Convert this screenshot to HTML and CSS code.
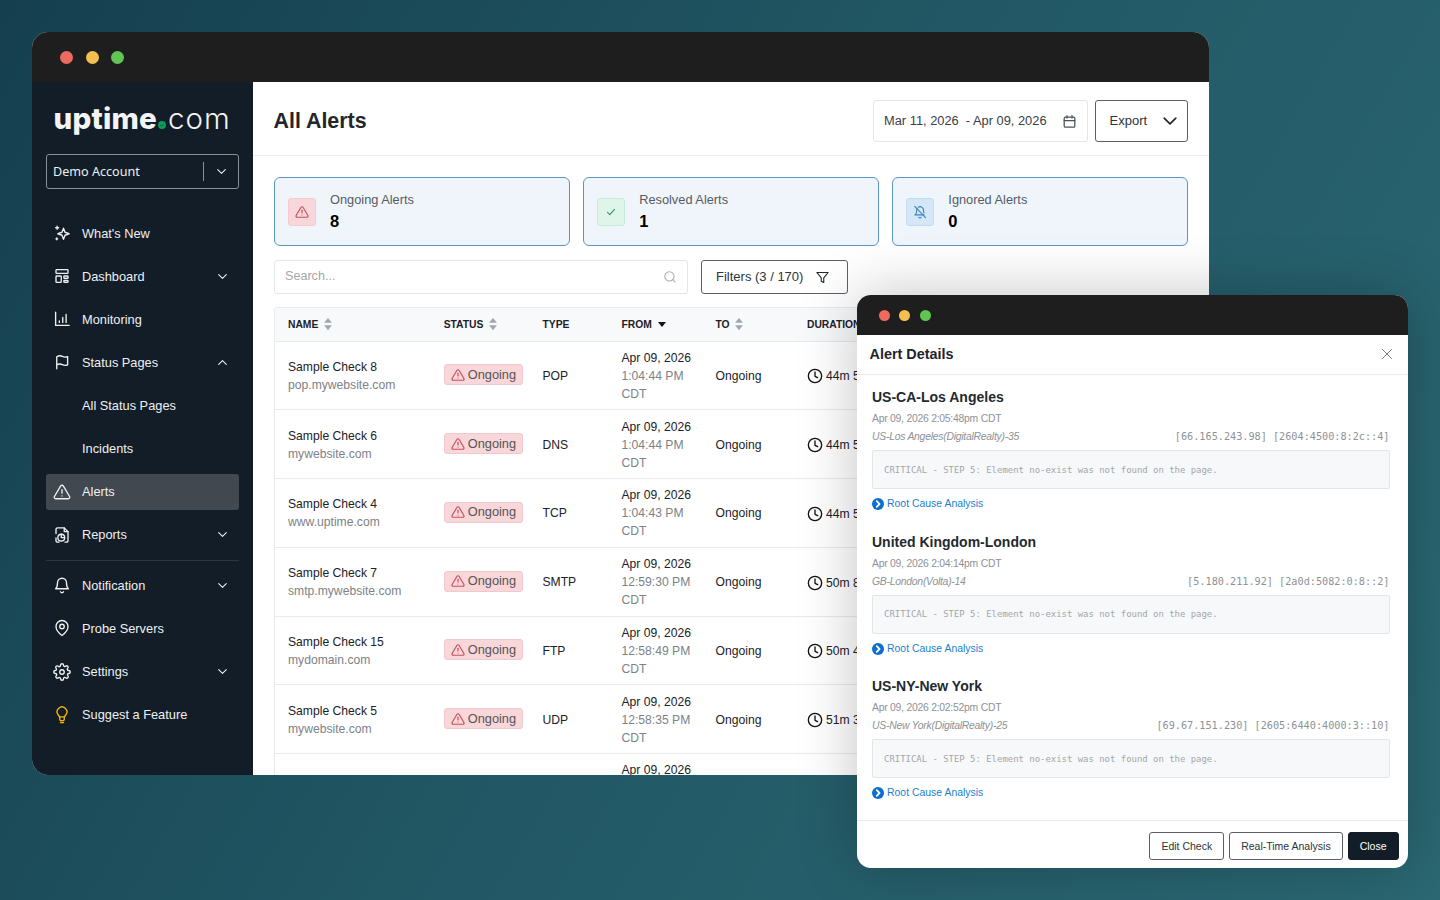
FILE: index.html
```html
<!DOCTYPE html>
<html lang="en">
<head>
<meta charset="utf-8">
<title>All Alerts</title>
<link rel="stylesheet" href="styles.css">
</head>
<body>
<svg class="defs" width="0" height="0" aria-hidden="true">
  <symbol id="i-alert" viewBox="0 0 24 24"><path d="M10.3 3.9 1.9 18a2 2 0 0 0 1.7 3h16.8a2 2 0 0 0 1.7-3L13.7 3.9a2 2 0 0 0-3.4 0Z"/><path d="M12 9v4.5"/><path d="M12 17.2h.01"/></symbol>
  <symbol id="i-down" viewBox="0 0 24 24"><path d="m5 8.5 7 7 7-7"/></symbol>
  <symbol id="i-up" viewBox="0 0 24 24"><path d="m5 15.5 7-7 7 7"/></symbol>
  <symbol id="i-clock" viewBox="0 0 24 24"><circle cx="12" cy="12" r="10"/><path d="M12 6v6.5l4 2"/></symbol>
  <symbol id="i-sort" viewBox="0 0 10 16"><path d="M5 1 9.5 6.6H.5Z"/><path d="M5 15 .5 9.4h9Z"/></symbol>
</svg>

<div class="desktop">
  <section class="window main-window">
    <header class="titlebar titlebar-main">
      <i class="dot red"></i><i class="dot yellow"></i><i class="dot green"></i>
    </header>
    <div class="app">
      <aside class="sidebar">
        <div class="logo"><span class="logo-a">uptime</span><span class="logo-dot"><svg viewBox="0 0 10 10"><path d="m3 5.2 1.500 1.500 2.600-3"/></svg></span><span class="logo-b">com</span></div>
        <div class="account">
          <span class="account-name">Demo Account</span>
          <span class="account-toggle"><svg class="chev-sm"><use href="#i-down"/></svg></span>
        </div>
        <nav class="nav">
          <a class="nav-item"><svg class="nav-icon" viewBox="0 0 24 24"><path d="M14 5.500 16 11l5.500 2-5.500 2-2 5.500-2-5.500-5.500-2 5.500-2Z"/><path d="M5.500 3v4M3.500 5h4"/><path d="M5 18.500v2.500M3.800 19.800h2.500"/></svg><span>What's New</span></a>
          <a class="nav-item"><svg class="nav-icon" viewBox="0 0 24 24"><rect x="4" y="3.500" width="16" height="5" rx="1"/><rect x="4" y="12" width="7" height="8.500" rx="1"/><rect x="14.500" y="12" width="5.500" height="3" rx=".8"/><rect x="14.500" y="18" width="5.500" height="2.500" rx=".8"/></svg><span>Dashboard</span><svg class="nav-chev"><use href="#i-down"/></svg></a>
          <a class="nav-item"><svg class="nav-icon" viewBox="0 0 24 24"><path d="M3.500 3v17.500h18"/><path d="M8.500 16.500v-2M13 16.500V10M17.500 16.500V6"/></svg><span>Monitoring</span></a>
          <a class="nav-item"><svg class="nav-icon" viewBox="0 0 24 24"><path d="M5 21V5c3.500-2.200 5.500-1.500 7.500-.5s4 1.500 7 .2v11c-3 1.300-5 .8-7-.2s-4.500-1.500-7.500.3"/></svg><span>Status Pages</span><svg class="nav-chev"><use href="#i-up"/></svg></a>
          <a class="nav-item"><span class="nav-spacer"></span><span>All Status Pages</span></a>
          <a class="nav-item"><span class="nav-spacer"></span><span>Incidents</span></a>
          <a class="nav-item active"><svg class="nav-icon" viewBox="0 0 24 24"><use href="#i-alert"/></svg><span>Alerts</span></a>
          <a class="nav-item"><svg class="nav-icon" viewBox="0 0 24 24"><path d="M8 21.500H6a2 2 0 0 1-2-2V16M4 10V4.500a2 2 0 0 1 2-2h9l5 5v12a2 2 0 0 1-2 2h-2"/><path d="M15 2.500v5h5"/><circle cx="11" cy="15.500" r="4.500"/><path d="M11 11v4.500h4.500"/></svg><span>Reports</span><svg class="nav-chev"><use href="#i-down"/></svg></a>
          <hr class="nav-divider">
          <a class="nav-item"><svg class="nav-icon" viewBox="0 0 24 24"><path d="M6 9a6 6 0 0 1 12 0c0 6 2.500 8 2.500 8h-17S6 15 6 9Z"/><path d="M10 21a2.200 2.200 0 0 0 4 0"/></svg><span>Notification</span><svg class="nav-chev"><use href="#i-down"/></svg></a>
          <a class="nav-item"><svg class="nav-icon" viewBox="0 0 24 24"><path d="M20 10c0 6-8 12-8 12s-8-6-8-12a8 8 0 0 1 16 0Z"/><circle cx="12" cy="10" r="3"/></svg><span>Probe Servers</span></a>
          <a class="nav-item"><svg class="nav-icon" viewBox="0 0 24 24"><circle cx="12" cy="12" r="3"/><path d="M19.400 15a1.650 1.650 0 0 0 .33 1.820l.06.06a2 2 0 1 1-2.830 2.830l-.06-.06a1.650 1.650 0 0 0-2.820 1.160V21a2 2 0 1 1-4 0v-.09A1.650 1.650 0 0 0 7.260 19.700l-.06.06a2 2 0 1 1-2.830-2.830l.06-.06A1.650 1.650 0 0 0 3.270 14H3a2 2 0 1 1 0-4h.09A1.650 1.650 0 0 0 4.300 7.260l-.06-.06a2 2 0 1 1 2.830-2.830l.06.06A1.650 1.650 0 0 0 10 3.270V3a2 2 0 1 1 4 0v.09a1.650 1.650 0 0 0 2.740 1.210l.06-.06a2 2 0 1 1 2.830 2.830l-.06.06A1.650 1.650 0 0 0 20.730 10H21a2 2 0 1 1 0 4h-.09a1.650 1.650 0 0 0-1.510 1Z"/></svg><span>Settings</span><svg class="nav-chev"><use href="#i-down"/></svg></a>
          <a class="nav-item"><svg class="nav-icon bulb" viewBox="0 0 24 24"><path d="M15.500 14.500c.3-1.200 1-2 1.800-3A6.500 6.500 0 1 0 6.700 11.500c.8 1 1.500 1.800 1.800 3Z"/><path d="M9 14.500V18a1.500 1.500 0 0 0 1.500 1.500h3A1.500 1.500 0 0 0 15 18v-3.500"/><path d="M10 22h4"/></svg><span>Suggest a Feature</span></a>
        </nav>
      </aside>

      <main class="content">
        <header class="content-head">
          <h1 class="page-title">All Alerts</h1>
          <div class="head-actions">
            <div class="date-range"><span class="lift">Mar 11, 2026&nbsp; - Apr 09, 2026</span>
              <svg class="cal" viewBox="0 0 24 24"><rect x="3.500" y="5" width="17" height="16" rx="2"/><path d="M3.500 10.500h17M8 2.500v4M16 2.500v4"/></svg></div>
            <button class="btn btn-export"><span class="lift">Export</span><svg class="export-chev"><use href="#i-down"/></svg></button>
          </div>
        </header>

        <div class="content-body">
          <div class="cards">
            <div class="card">
              <span class="card-icon red-box"><svg viewBox="0 0 24 24"><use href="#i-alert"/></svg></span>
              <div><div class="card-label">Ongoing Alerts</div><div class="card-value">8</div></div>
            </div>
            <div class="card">
              <span class="card-icon green-box"><svg viewBox="0 0 24 24"><path d="m6 12.500 4 4 8-9"/></svg></span>
              <div><div class="card-label">Resolved Alerts</div><div class="card-value">1</div></div>
            </div>
            <div class="card">
              <span class="card-icon blue-box"><svg viewBox="0 0 24 24"><path d="M10 21a2.200 2.200 0 0 0 4 0"/><path d="M19 17H3.500S6.500 15 6.500 9c0-1 .2-1.800.6-2.600M9 3.700A6 6 0 0 1 18 9c0 2 .3 3.600.8 4.800"/><path d="m3 2.500 18.500 19"/></svg></span>
              <div><div class="card-label">Ignored Alerts</div><div class="card-value">0</div></div>
            </div>
          </div>

          <div class="toolbar">
            <div class="search"><span class="search-text">Search...</span><svg viewBox="0 0 24 24"><circle cx="11" cy="11" r="8"/><path d="m21 21-4.300-4.300"/></svg></div>
            <button class="btn btn-filters"><span class="lift">Filters (3 / 170)</span><svg viewBox="0 0 24 24"><path d="M3 4h18l-7 8.500V20l-4-2v-5.500Z"/></svg></button>
          </div>

          <table class="alerts">
            <colgroup><col class="c-name"><col class="c-status"><col class="c-type"><col class="c-from"><col class="c-to"><col class="c-dur"></colgroup>
            <thead>
              <tr>
                <th>NAME <svg class="sort"><use href="#i-sort"/></svg></th>
                <th>STATUS <svg class="sort"><use href="#i-sort"/></svg></th>
                <th>TYPE</th>
                <th>FROM <i class="caret"></i></th>
                <th>TO <svg class="sort"><use href="#i-sort"/></svg></th>
                <th>DURATION</th>
              </tr>
            </thead>
            <tbody>
              <tr>
                <td><div class="check">Sample Check 8</div><div class="muted">pop.mywebsite.com</div></td>
                <td><span class="badge"><svg viewBox="0 0 24 24"><use href="#i-alert"/></svg>Ongoing</span></td>
                <td>POP</td>
                <td><div>Apr 09, 2026</div><div class="muted">1:04:44 PM</div><div class="muted">CDT</div></td>
                <td>Ongoing</td>
                <td><span class="dur"><svg viewBox="0 0 24 24"><use href="#i-clock"/></svg>44m 5</span></td>
              </tr>
              <tr>
                <td><div class="check">Sample Check 6</div><div class="muted">mywebsite.com</div></td>
                <td><span class="badge"><svg viewBox="0 0 24 24"><use href="#i-alert"/></svg>Ongoing</span></td>
                <td>DNS</td>
                <td><div>Apr 09, 2026</div><div class="muted">1:04:44 PM</div><div class="muted">CDT</div></td>
                <td>Ongoing</td>
                <td><span class="dur"><svg viewBox="0 0 24 24"><use href="#i-clock"/></svg>44m 5</span></td>
              </tr>
              <tr>
                <td><div class="check">Sample Check 4</div><div class="muted">www.uptime.com</div></td>
                <td><span class="badge"><svg viewBox="0 0 24 24"><use href="#i-alert"/></svg>Ongoing</span></td>
                <td>TCP</td>
                <td><div>Apr 09, 2026</div><div class="muted">1:04:43 PM</div><div class="muted">CDT</div></td>
                <td>Ongoing</td>
                <td><span class="dur"><svg viewBox="0 0 24 24"><use href="#i-clock"/></svg>44m 5</span></td>
              </tr>
              <tr>
                <td><div class="check">Sample Check 7</div><div class="muted">smtp.mywebsite.com</div></td>
                <td><span class="badge"><svg viewBox="0 0 24 24"><use href="#i-alert"/></svg>Ongoing</span></td>
                <td>SMTP</td>
                <td><div>Apr 09, 2026</div><div class="muted">12:59:30 PM</div><div class="muted">CDT</div></td>
                <td>Ongoing</td>
                <td><span class="dur"><svg viewBox="0 0 24 24"><use href="#i-clock"/></svg>50m 8</span></td>
              </tr>
              <tr>
                <td><div class="check">Sample Check 15</div><div class="muted">mydomain.com</div></td>
                <td><span class="badge"><svg viewBox="0 0 24 24"><use href="#i-alert"/></svg>Ongoing</span></td>
                <td>FTP</td>
                <td><div>Apr 09, 2026</div><div class="muted">12:58:49 PM</div><div class="muted">CDT</div></td>
                <td>Ongoing</td>
                <td><span class="dur"><svg viewBox="0 0 24 24"><use href="#i-clock"/></svg>50m 4</span></td>
              </tr>
              <tr>
                <td><div class="check">Sample Check 5</div><div class="muted">mywebsite.com</div></td>
                <td><span class="badge"><svg viewBox="0 0 24 24"><use href="#i-alert"/></svg>Ongoing</span></td>
                <td>UDP</td>
                <td><div>Apr 09, 2026</div><div class="muted">12:58:35 PM</div><div class="muted">CDT</div></td>
                <td>Ongoing</td>
                <td><span class="dur"><svg viewBox="0 0 24 24"><use href="#i-clock"/></svg>51m 3</span></td>
              </tr>
              <tr class="row-cut">
                <td></td>
                <td></td>
                <td></td>
                <td><div>Apr 09, 2026</div></td>
                <td></td>
                <td></td>
              </tr>
            </tbody>
          </table>
        </div>
      </main>
    </div>
  </section>

  <section class="window modal-window">
    <header class="titlebar titlebar-modal">
      <i class="dot dot-sm red"></i><i class="dot dot-sm yellow"></i><i class="dot dot-sm green"></i>
    </header>
    <div class="modal-head">
      <h2 class="modal-title">Alert Details</h2>
      <svg class="modal-close" viewBox="0 0 24 24"><path d="M3 3l18 18M21 3 3 21"/></svg>
    </div>
    <div class="modal-body">
      <article class="probe">
        <h3 class="probe-name">US-CA-Los Angeles</h3>
        <div class="probe-date">Apr 09, 2026 2:05:48pm CDT</div>
        <div class="probe-meta"><em>US-Los Angeles(DigitalRealty)-35</em><code>[66.165.243.98] [2604:4500:8:2c::4]</code></div>
        <pre class="probe-msg">CRITICAL - STEP 5: Element no-exist was not found on the page.</pre>
        <a class="rca"><svg viewBox="0 0 16 16"><circle cx="8" cy="8" r="8"/><path d="m6.300 4.300 3.700 3.700-3.700 3.700"/></svg>Root Cause Analysis</a>
      </article>
      <article class="probe">
        <h3 class="probe-name">United Kingdom-London</h3>
        <div class="probe-date">Apr 09, 2026 2:04:14pm CDT</div>
        <div class="probe-meta"><em>GB-London(Volta)-14</em><code>[5.180.211.92] [2a0d:5082:0:8::2]</code></div>
        <pre class="probe-msg">CRITICAL - STEP 5: Element no-exist was not found on the page.</pre>
        <a class="rca"><svg viewBox="0 0 16 16"><circle cx="8" cy="8" r="8"/><path d="m6.300 4.300 3.700 3.700-3.700 3.700"/></svg>Root Cause Analysis</a>
      </article>
      <article class="probe">
        <h3 class="probe-name">US-NY-New York</h3>
        <div class="probe-date">Apr 09, 2026 2:02:52pm CDT</div>
        <div class="probe-meta"><em>US-New York(DigitalRealty)-25</em><code>[69.67.151.230] [2605:6440:4000:3::10]</code></div>
        <pre class="probe-msg">CRITICAL - STEP 5: Element no-exist was not found on the page.</pre>
        <a class="rca"><svg viewBox="0 0 16 16"><circle cx="8" cy="8" r="8"/><path d="m6.300 4.300 3.700 3.700-3.700 3.700"/></svg>Root Cause Analysis</a>
      </article>
    </div>
    <footer class="modal-foot">
      <button class="btn btn-sm">Edit Check</button>
      <button class="btn btn-sm">Real-Time Analysis</button>
      <button class="btn btn-sm btn-dark">Close</button>
    </footer>
  </section>
</div>
</body>
</html>
```

FILE: styles.css
```css
* { box-sizing: border-box; }
html, body { margin: 0; padding: 0; }
body {
  font-family: "Liberation Sans", Arial, sans-serif;
  font-size: 12.150px;
  color: #1c2127;
}
.defs { position: absolute; }
.desktop {
  position: relative;
  width: 1440px;
  height: 900px;
  overflow: hidden;
  background: linear-gradient(120deg, #153f4e 0%, #225865 50%, #2b6873 100%);
}
svg { fill: none; stroke: currentColor; stroke-linecap: round; stroke-linejoin: round; }
.lift { padding-bottom: 2px; }

/* Windows */
.window { position: absolute; display: flex; flex-direction: column; overflow: hidden; }
.main-window { left: 32px; top: 32px; width: 1177px; height: 743px; border-radius: 16px; background: #fff; }
.modal-window { left: 856.500px; top: 295px; width: 551px; height: 573px; border-radius: 14px; background: #fff; box-shadow: 0 0 60px rgba(0, 0, 0, .24); }
.titlebar { display: flex; align-items: center; background: #1e1e1e; flex: none; }
.titlebar-main { height: 50px; gap: 12.700px; padding-left: 28px; }
.titlebar-modal { height: 40px; gap: 9.500px; padding-left: 22px; }
.dot { width: 13px; height: 13px; border-radius: 50%; display: block; }
.dot-sm { width: 11px; height: 11px; }
.red { background: #ed6a5e; }
.yellow { background: #f4bf4f; }
.green { background: #61c554; }

.app { flex: 1; display: flex; min-height: 0; }

/* Sidebar */
.sidebar { flex: none; width: 221px; background: #121d27; padding: 20px 14px 0 14px; color: #eef0f2; }
.logo { display: flex; align-items: baseline; padding-left: 7.500px; height: 34px; color: #f4f4f4; font-family: Inter, sans-serif; line-height: 32px; }
.logo-a { font-size: 29.500px; font-weight: 800; letter-spacing: .2px; }
.logo-dot { width: 8px; height: 8px; border-radius: 50%; background: #0d9a5c; margin: 0 1.500px 0 1.500px; display: block; }
.logo-dot svg { display: block; width: 8px; height: 8px; stroke: #0a5c37; stroke-width: 1; }
.logo-b { font-size: 29.500px; font-weight: 300; letter-spacing: 1px; }
.account { display: flex; align-items: center; justify-content: space-between; height: 35px; margin-top: 18px; border: 1px solid #8a9096; border-radius: 3px; padding-left: 6px; font-family: "Noto Sans", sans-serif; font-size: 12.600px; }
.account-toggle { display: flex; align-items: center; justify-content: center; width: 35px; height: 19px; border-left: 1px solid #8a9096; }
.chev-sm { width: 13px; height: 13px; stroke-width: 2; }
.nav { margin-top: 26px; display: flex; flex-direction: column; gap: 7.100px; }
.nav-item { display: flex; align-items: center; height: 36px; padding: 0 10px 0 7px; border-radius: 3px; font-size: 12.800px; }
.nav-item.active { background: #41484f; }
.nav-icon { width: 18px; height: 18px; flex: none; margin-right: 11px; stroke-width: 1.800; }
.nav-spacer { width: 18px; margin-right: 11px; flex: none; }
.nav-chev { width: 13px; height: 13px; margin-left: auto; stroke-width: 2; }
.bulb { color: #f2b705; }
.nav-divider { margin: 0 0 -.5px; border: 0; border-top: 1px solid #2c363f; }

/* Content */
.content { flex: 1; min-width: 0; overflow: hidden; }
.content-head { display: flex; align-items: center; justify-content: space-between; height: 74px; padding: 5px 21px 0 20.500px; border-bottom: 1px solid #eceef0; }
.page-title { margin: 0; padding-top: 1px; font-size: 21.400px; font-weight: 700; color: #22262a; }
.head-actions { display: flex; gap: 7px; }
.date-range { display: flex; align-items: center; justify-content: space-between; width: 215px; height: 42px; padding: 0 10px; border: 1px solid #e3e5e8; border-radius: 3px; font-size: 12.850px; color: #3a4047; }
.cal { width: 15px; height: 15px; stroke-width: 2; color: #4b5157; }
.btn { font-family: inherit; background: #fff; border: 1px solid #5a6066; border-radius: 3px; color: #2d3339; cursor: pointer; display: flex; align-items: center; }
.btn-export { width: 93px; height: 42px; padding: 0 7px 0 13.500px; justify-content: space-between; font-size: 13px; }
.export-chev { width: 20px; height: 20px; stroke-width: 2; color: #22272c; }
.content-body { padding: 21px 21px 0; }
.cards { display: grid; grid-template-columns: repeat(3, 1fr); gap: 13.500px; }
.card { display: flex; align-items: center; gap: 14px; height: 69px; padding: 0 13px; background: #f0f5fb; border: 1px solid #5a95c4; border-radius: 6px; }
.card-icon { display: flex; align-items: center; justify-content: center; width: 28px; height: 28px; border-radius: 3px; border: 1px solid; flex: none; }
.card-icon svg { width: 14px; height: 14px; stroke-width: 2; }
.red-box { background: #f8d7da; border-color: #f5c9cd; color: #c8505d; }
.green-box { background: #dff5ea; border-color: #c2ecd8; color: #2f9a6b; }
.blue-box { background: #d5e7f7; border-color: #c0dcf1; color: #3a86c0; }
.card-label { font-size: 12.800px; color: #565c63; line-height: 18px; }
.card-value { font-size: 16.500px; font-weight: 700; color: #000; line-height: 22px; margin-top: 1px; }
.toolbar { display: flex; gap: 13px; margin-top: 14px; }
.search { display: flex; align-items: center; justify-content: space-between; width: 414px; height: 34px; padding: 0 10px; border: 1px solid #e4e6e9; border-radius: 3px; color: #a3a8ad; font-size: 12.600px; }
.search-text { padding-bottom: 2px; }
.search svg { width: 14px; height: 14px; stroke-width: 1.800; color: #a7abb0; }
.btn-filters { width: 147px; height: 34px; justify-content: space-between; padding: 0 17px 0 14px; font-size: 13px; }
.btn-filters svg { width: 15px; height: 15px; stroke-width: 1.800; color: #22272c; }

/* Table */
.alerts { table-layout: fixed; width: 914px; margin-top: 13px; border-collapse: separate; border-spacing: 0; border: 1px solid #e8eaed; border-bottom: 0; border-radius: 3px 3px 0 0; }
.c-name { width: 155.700px; }
.c-status { width: 98.800px; }
.c-type { width: 79px; }
.c-from { width: 94px; }
.c-to { width: 91.500px; }
.alerts th { height: 33.500px; padding: 0 0 0 13px; background: #f8f9fa; border-bottom: 1px solid #e8eaed; text-align: left; font-size: 10.300px; font-weight: 700; color: #1c2127; white-space: nowrap; overflow: hidden; }
.sort { width: 10px; height: 14px; vertical-align: -3px; margin-left: 2px; fill: #a2a7ad; stroke: none; }
.caret { display: inline-block; width: 0; height: 0; margin-left: 3px; vertical-align: 1px; border: 4.500px solid transparent; border-top: 5px solid #111; border-bottom: 0; }
.alerts td { height: 68.750px; padding: 1px 0 0 13px; border-bottom: 1px solid #e8eaed; color: #1c2127; font-size: 12.150px; line-height: 18px; white-space: nowrap; overflow: hidden; }
.alerts .row-cut td { vertical-align: top; padding-top: 7px; }
.check { color: #1c2127; }
.muted { color: #7d8287; }
.badge { display: inline-flex; align-items: center; gap: 3px; height: 21px; margin-bottom: 2px; padding: 0 6px; background: #f8d7da; border: 1px solid #f3c7cb; border-radius: 3px; color: #555; font-size: 12.800px; vertical-align: middle; }
.badge svg { width: 14px; height: 14px; stroke-width: 2; color: #c8505d; }
.dur { display: inline-flex; align-items: center; gap: 3px; vertical-align: middle; }
.dur svg { width: 16px; height: 16px; stroke-width: 2; color: #111; }

/* Modal */
.modal-head { display: flex; align-items: center; justify-content: space-between; height: 40px; padding: 0 15px 1px 13px; border-bottom: 1px solid #e8eaed; flex: none; }
.modal-title { margin: 0; font-size: 14.400px; font-weight: 700; color: #1f252b; }
.modal-close { width: 12px; height: 12px; stroke-width: 1.600; color: #555c62; }
.modal-body { flex: 1; min-height: 0; padding: 13px 18px 0 15.500px; }
.probe { height: 144.500px; }
.probe-name { margin: 0; font-size: 14px; font-weight: 700; line-height: 18px; color: #24292f; }
.probe-date { margin-top: 5px; font-size: 10.400px; letter-spacing: -.25px; line-height: 15px; color: #8d9297; }
.probe-meta { display: flex; justify-content: space-between; align-items: baseline; margin-top: 3px; line-height: 15px; font-size: 10.400px; letter-spacing: -.25px; color: #8d9297; }
.probe-meta code { font-family: "DejaVu Sans Mono", monospace; font-size: 10.200px; letter-spacing: 0; }
.probe-msg { margin: 6px 0 0; height: 39px; display: flex; align-items: center; padding: 0 11px; background: #f7f8fa; border: 1px solid #e3e6e9; border-radius: 2px; font-family: "DejaVu Sans Mono", monospace; font-size: 8.950px; color: #a3a7ab; }
.rca { display: flex; align-items: center; gap: 3px; margin-top: 8px; font-size: 10.450px; line-height: 14px; color: #1a7fd0; }
.rca svg { width: 12px; height: 12px; stroke: none; }
.rca svg circle { fill: #0b6fd0; }
.rca svg path { stroke: #fff; stroke-width: 2.400; }
.modal-foot { display: flex; justify-content: flex-end; gap: 5px; height: 48px; padding: 11px 9px 0 0; border-top: 1px solid #e8eaed; flex: none; }
.btn-sm { height: 28px; padding: 0 11px; font-size: 10.500px; }
.btn-dark { background: #121d27; border-color: #121d27; color: #fff; }
```
